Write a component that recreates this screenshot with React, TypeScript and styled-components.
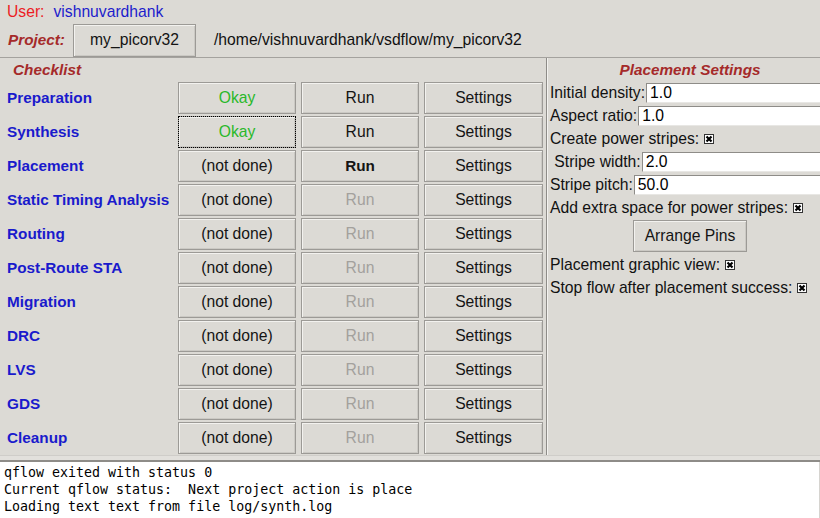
import React from 'react'
import styled, { createGlobalStyle, css } from 'styled-components'

const GlobalStyle = createGlobalStyle`
  html, body {
    margin: 0;
    padding: 0;
    overflow: hidden;
    background: #dcdad5;
  }
  * {
    box-sizing: border-box;
  }
`

const FONT = `"Liberation Sans", Arial, sans-serif`

const Window = styled.div`
  width: 820px;
  height: 518px;
  overflow: hidden;
  background: #dcdad5;
  font-family: ${FONT};
  font-size: 15.7px;
  color: #111;
  display: flex;
  flex-direction: column;
`

const Header = styled.div`
  height: 58px;
  border-bottom: 1px solid #a4a29e;
  display: flex;
  flex-direction: column;
`

const UserRow = styled.div`
  height: 23px;
  display: flex;
  align-items: center;
  gap: 9px;
  padding-left: 7px;
  padding-top: 1px;
`

const UserLabel = styled.span`
  color: #ec1c24;
`

const UserName = styled.span`
  color: #1d1dcc;
`

const ProjectRow = styled.div`
  height: 34px;
  display: flex;
  align-items: center;
`

const ProjectLabel = styled.span`
  width: 73px;
  padding-left: 8px;
  font-size: 15.3px;
  font-weight: bold;
  font-style: italic;
  color: #a52a2a;
`

const ProjectPath = styled.span`
  margin-left: 18px;
`

const TkButton = styled.div<{
  $tone?: 'ok' | 'normal' | 'disabled'
  $bold?: boolean
  $focus?: boolean
  $w?: number
}>`
  width: ${(p) => (p.$w ? `${p.$w}px` : 'auto')};
  height: 32px;
  display: flex;
  align-items: center;
  justify-content: center;
  background: #dcdad5;
  border: 1px solid #9c9a96;
  box-shadow: inset 1px 1px 0 #f3f2ef, inset -1px -1px 0 #cbc9c4;
  font-family: ${FONT};
  font-size: ${(p) => (p.$bold ? '15.3px' : '15.7px')};
  color: ${(p) =>
    p.$tone === 'ok' ? '#29b829' : p.$tone === 'disabled' ? '#a3a19d' : '#141414'};
  font-weight: ${(p) => (p.$bold ? 'bold' : 'normal')};
  ${(p) =>
    p.$focus &&
    css`
      outline: 1px dotted #000;
      outline-offset: -1px;
    `}
`

const ProjectButton = styled(TkButton)`
  width: 123px;
  height: 33px;
`

const Main = styled.div`
  height: 397px;
  display: flex;
`

const LeftPanel = styled.div`
  width: 547px;
  flex: none;
  border-right: 1px solid #8e8c88;
`

const PanelTitle = styled.div<{ $center?: boolean }>`
  height: 23px;
  display: flex;
  align-items: center;
  justify-content: ${(p) => (p.$center ? 'center' : 'flex-start')};
  padding-left: ${(p) => (p.$center ? '0' : '13px')};
  font-size: 15.3px;
  font-weight: bold;
  font-style: italic;
  color: #a52a2a;
`

const Checklist = styled.div`
  margin-top: 1px;
  display: grid;
  grid-template-columns: 173px 118px 118px 119px;
  grid-auto-rows: 32px;
  column-gap: 5px;
  row-gap: 2px;
`

const StepLabel = styled.div`
  display: flex;
  align-items: center;
  padding-left: 7px;
  font-size: 15.3px;
  font-weight: bold;
  color: #1a1acc;
`

const RightPanel = styled.div`
  width: 283px;
  flex: none;
  border-left: 1px solid #f3f2ef;
  padding-left: 2px;
  display: flex;
  flex-direction: column;
`

const SettingRow = styled.div`
  height: 23px;
  display: flex;
  align-items: center;
`

const SettingLabel = styled.span`
  white-space: pre;
`

const Entry = styled.div`
  flex: 1;
  height: 20px;
  margin-left: 1px;
  background: #fff;
  border: 1px solid;
  border-color: #8e8c88 #e8e7e4 #e8e7e4 #8e8c88;
  padding-left: 3px;
  display: flex;
  align-items: center;
  color: #000;
`

const CenterRow = styled.div`
  height: 34px;
  display: flex;
  align-items: center;
  justify-content: center;
`

const Sash = styled.div`
  height: 7px;
  background: #e2e0dc;
  border-top: 1px solid #cfcdc9;
  border-bottom: 2px solid #8e8c88;
`

const Console = styled.div`
  flex: 1;
  background: #fff;
  padding: 2px 4px 0;
  font-family: "DejaVu Sans Mono", "Liberation Mono", monospace;
  font-size: 13.3px;
  line-height: 17px;
  color: #000;
  white-space: pre;
  border-right: 1px solid #d6d4d0;
`

const Check = () => (
  <svg width="10" height="10" viewBox="0 0 10 10" style={{ marginLeft: 5 }}>
    <rect x="0.5" y="0.5" width="9" height="9" fill="#fff" stroke="#333" />
    <path d="M2.5 2.5 L7.5 7.5 M7.5 2.5 L2.5 7.5" stroke="#000" strokeWidth="2.2" />
  </svg>
)

type Step = {
  name: string
  status: string
  ok?: boolean
  run: 'normal' | 'bold' | 'disabled'
  focus?: boolean
}

const steps: Step[] = [
  { name: 'Preparation', status: 'Okay', ok: true, run: 'normal' },
  { name: 'Synthesis', status: 'Okay', ok: true, run: 'normal', focus: true },
  { name: 'Placement', status: '(not done)', run: 'bold' },
  { name: 'Static Timing Analysis', status: '(not done)', run: 'disabled' },
  { name: 'Routing', status: '(not done)', run: 'disabled' },
  { name: 'Post-Route STA', status: '(not done)', run: 'disabled' },
  { name: 'Migration', status: '(not done)', run: 'disabled' },
  { name: 'DRC', status: '(not done)', run: 'disabled' },
  { name: 'LVS', status: '(not done)', run: 'disabled' },
  { name: 'GDS', status: '(not done)', run: 'disabled' },
  { name: 'Cleanup', status: '(not done)', run: 'disabled' },
]

export default function App() {
  return (
    <>
      <GlobalStyle />
      <Window>
        <Header>
          <UserRow>
            <UserLabel>User:</UserLabel>
            <UserName>vishnuvardhank</UserName>
          </UserRow>
          <ProjectRow>
            <ProjectLabel>Project:</ProjectLabel>
            <ProjectButton>my_picorv32</ProjectButton>
            <ProjectPath>/home/vishnuvardhank/vsdflow/my_picorv32</ProjectPath>
          </ProjectRow>
        </Header>

        <Main>
          <LeftPanel>
            <PanelTitle>Checklist</PanelTitle>
            <Checklist>
              {steps.map((s) => (
                <React.Fragment key={s.name}>
                  <StepLabel>{s.name}</StepLabel>
                  <TkButton $tone={s.ok ? 'ok' : 'normal'} $focus={s.focus}>
                    {s.status}
                  </TkButton>
                  <TkButton
                    $tone={s.run === 'disabled' ? 'disabled' : 'normal'}
                    $bold={s.run === 'bold'}
                  >
                    Run
                  </TkButton>
                  <TkButton>Settings</TkButton>
                </React.Fragment>
              ))}
            </Checklist>
          </LeftPanel>

          <RightPanel>
            <PanelTitle $center>Placement Settings</PanelTitle>
            <SettingRow>
              <SettingLabel>Initial density:</SettingLabel>
              <Entry>1.0</Entry>
            </SettingRow>
            <SettingRow>
              <SettingLabel>Aspect ratio:</SettingLabel>
              <Entry>1.0</Entry>
            </SettingRow>
            <SettingRow>
              <SettingLabel>Create power stripes:</SettingLabel>
              <Check />
            </SettingRow>
            <SettingRow>
              <SettingLabel> Stripe width:</SettingLabel>
              <Entry>2.0</Entry>
            </SettingRow>
            <SettingRow>
              <SettingLabel>Stripe pitch:</SettingLabel>
              <Entry>50.0</Entry>
            </SettingRow>
            <SettingRow>
              <SettingLabel>Add extra space for power stripes:</SettingLabel>
              <Check />
            </SettingRow>
            <CenterRow>
              <TkButton $w={114}>Arrange Pins</TkButton>
            </CenterRow>
            <SettingRow>
              <SettingLabel>Placement graphic view:</SettingLabel>
              <Check />
            </SettingRow>
            <SettingRow>
              <SettingLabel>Stop flow after placement success:</SettingLabel>
              <Check />
            </SettingRow>
          </RightPanel>
        </Main>

        <Sash />
        <Console>
          {'qflow exited with status 0\nCurrent qflow status:  Next project action is place\nLoading text text from file log/synth.log'}
        </Console>
      </Window>
    </>
  )
}
